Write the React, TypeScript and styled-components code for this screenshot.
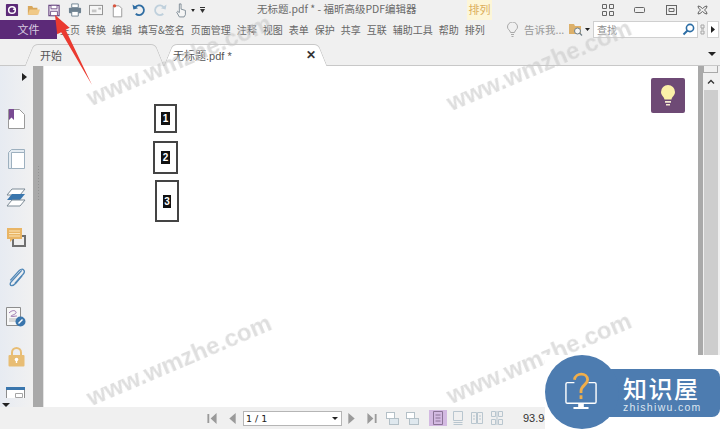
import React from 'react';
import styled, { createGlobalStyle } from 'styled-components';

const GlobalStyle = createGlobalStyle`
  html, body {
    margin: 0;
    padding: 0;
    background: #f0f0f0;
  }
  * {
    box-sizing: border-box;
  }
`;

const Window = styled.div`
  position: relative;
  width: 720px;
  height: 429px;
  overflow: hidden;
  display: flex;
  flex-direction: column;
  background: #f0f0f0;
  font-family: "Noto Sans CJK SC", "Liberation Sans", sans-serif;
  color: #5a5a5a;
`;

const Icon = styled.svg<{ $ml?: number }>`
  display: block;
  flex-shrink: 0;
  margin-left: ${(p) => p.$ml ?? 0}px;
`;

const TitleBar = styled.div`
  height: 20px;
  display: flex;
  align-items: center;
  flex-shrink: 0;
`;

const QuickTools = styled.div`
  width: 257px;
  display: flex;
  align-items: center;
  padding-left: 5px;
  flex-shrink: 0;
`;

const TitleText = styled.div`
  width: 210px;
  font-size: 10.5px;
  line-height: 18px;
  height: 20px;
  white-space: nowrap;
  color: #6a6a6a;
`;

const ContextTab = styled.div`
  width: 25px;
  height: 20px;
  font-size: 11px;
  line-height: 19px;
  text-align: center;
  color: #dcae5c;
  background: #fdf6d8;
`;

const WindowButtons = styled.div`
  margin-left: auto;
  width: 118px;
  display: flex;
  align-items: center;
  justify-content: space-between;
  padding-right: 12px;
`;

const MenuBar = styled.div`
  height: 19px;
  display: flex;
  align-items: center;
  flex-shrink: 0;
`;

const FileButton = styled.div`
  width: 57px;
  height: 19px;
  background: #5c2a78;
  color: #d8cbe0;
  font-size: 11px;
  line-height: 19px;
  text-align: center;
  flex-shrink: 0;
`;

const MenuItems = styled.div`
  width: 432px;
  display: flex;
  gap: 6px;
  padding-left: 3px;
  flex-shrink: 0;
`;

const MenuItem = styled.span`
  font-size: 10px;
  line-height: 19px;
  white-space: nowrap;
  color: #666;
`;

const TellMe = styled.div`
  display: flex;
  align-items: center;
  gap: 6px;
  width: 80px;
  padding-left: 18px;
  flex-shrink: 0;
  font-size: 10.5px;
  color: #999;
  white-space: nowrap;
`;

const SearchBox = styled.div`
  width: 105px;
  height: 17px;
  background: #fff;
  border: 1px solid #cfcfcf;
  display: flex;
  align-items: center;
  justify-content: space-between;
  padding: 0 2px 0 3px;
  margin-left: 3px;
  font-size: 10px;
  color: #8d8d8d;
  flex-shrink: 0;
`;

const RibbonToggle = styled.div`
  width: 12px;
  height: 17px;
  background: #fff;
  border: 1px solid #d4d4d4;
  margin-left: 2px;
  display: flex;
  align-items: center;
  justify-content: center;
  flex-shrink: 0;
`;

const TabRow = styled.div`
  height: 27px;
  display: flex;
  align-items: flex-end;
  flex-shrink: 0;
  padding-left: 25px;
  border-bottom: 1px solid #c8c8c8;
`;

const Tab = styled.div<{ $active?: boolean; $width: number; $pad: number }>`
  position: relative;
  isolation: isolate;
  width: ${(p) => p.$width}px;
  height: 22px;
  margin-bottom: -1px;
  display: flex;
  align-items: center;
  justify-content: space-between;
  padding: 0 11px 0 ${(p) => p.$pad}px;
  font-size: 11px;
  color: #555;
  font-family: "Liberation Sans", "Noto Sans CJK SC", sans-serif;

  &::before,
  &::after {
    content: '';
    position: absolute;
    top: 0;
    bottom: 0;
    width: 60%;
    z-index: -1;
    background: ${(p) => (p.$active ? '#fff' : '#f0f0f0')};
    border-top: 1px solid #c8c8c8;
  }

  &::before {
    left: 4px;
    border-left: 1px solid #c8c8c8;
    border-top-left-radius: 5px;
    transform: skewX(-22deg);
  }

  &::after {
    right: 4px;
    border-right: 1px solid #c8c8c8;
    border-top-right-radius: 5px;
    transform: skewX(22deg);
  }
`;

const TabClose = styled.span`
  font-size: 12px;
  font-weight: 700;
  color: #333;
`;

const RowCaret = styled.div`
  margin-left: auto;
  margin-right: 4px;
  align-self: flex-start;
  margin-top: 13px;
  width: 0;
  height: 0;
  border-left: 4px solid transparent;
  border-right: 4px solid transparent;
  border-top: 4px solid #222;
`;

const Workspace = styled.div`
  flex: 1;
  display: flex;
  min-height: 0;
`;

const Sidebar = styled.div`
  width: 33px;
  display: flex;
  flex-direction: column;
  align-items: center;
  background: linear-gradient(to right, #e7ebf2, #f1f1f1);
  position: relative;
  flex-shrink: 0;
  overflow: hidden;
  padding-top: 7px;
`;

const SideCaret = styled.div`
  width: 0;
  height: 0;
  margin-left: 16px;
  border-top: 4px solid transparent;
  border-bottom: 4px solid transparent;
  border-left: 5px solid #222;
`;

const SideIcons = styled.div`
  margin-top: 28px;
  margin-left: -1px;
  display: flex;
  flex-direction: column;
  align-items: center;
  gap: 19.7px;
  height: 289px;
  overflow: hidden;
`;

const SideBottomCaret = styled.div`
  position: absolute;
  left: 2px;
  bottom: 0;
  width: 0;
  height: 0;
  border-left: 4px solid transparent;
  border-right: 4px solid transparent;
  border-top: 4px solid #222;
`;

const Splitter = styled.div`
  width: 11px;
  background: #a9a9a9;
  border-right: 1px solid #e4e4e4;
  flex-shrink: 0;
  display: flex;
  align-items: center;
  justify-content: center;
`;

const SplitterGrip = styled.div`
  width: 3px;
  height: 36px;
  margin-top: -108px;
  background-image: radial-gradient(#939393 40%, transparent 45%);
  background-size: 3px 3px;
`;

const Page = styled.div`
  flex: 1;
  background: #fff;
  position: relative;
`;

const NumberBox = styled.div<{ $x: number; $y: number; $w: number; $h: number }>`
  position: absolute;
  left: ${(p) => p.$x}px;
  top: ${(p) => p.$y}px;
  width: ${(p) => p.$w}px;
  height: ${(p) => p.$h}px;
  border: 2px solid #444;
  display: flex;
  align-items: center;
  justify-content: center;
`;

const NumberLabel = styled.span`
  background: #111;
  color: #fff;
  font-family: "Liberation Sans", sans-serif;
  font-size: 10px;
  font-weight: 700;
  line-height: 13px;
  padding: 0 1.500px;
`;

const HintButton = styled.div`
  position: absolute;
  right: 13px;
  top: 12px;
  width: 34px;
  height: 35px;
  border-radius: 2px;
  background: #6e4a75;
  display: flex;
  align-items: center;
  justify-content: center;
`;

const Scrollbar = styled.div`
  width: 22px;
  display: flex;
  flex-direction: column;
  flex-shrink: 0;
  background: #f0f0f0;
  border-left: 5px solid #a9a9a9;
  padding-right: 2px;
`;

const ScrollTopGrip = styled.div`
  height: 7px;
  background: #f0f0f0;
  border: 1px solid #a9a9a9;
  border-top: none;
`;

const ScrollArrow = styled.div`
  height: 17px;
  display: flex;
  align-items: center;
  justify-content: center;
`;

const ScrollThumb = styled.div`
  flex: 1;
  margin-left: 1px;
  background: #cdcdcd;
`;

const StatusBar = styled.div`
  height: 22px;
  display: flex;
  align-items: center;
  flex-shrink: 0;
  padding-left: 207px;
  background: #f0f0f0;
`;

const PageSelect = styled.div`
  width: 99px;
  height: 15px;
  background: #fff;
  border: 1px solid #b5b5b5;
  margin: 0 6px 0 7px;
  display: flex;
  align-items: center;
  justify-content: space-between;
  padding: 0 3px 0 2px;
  font-family: "DejaVu Sans", sans-serif;
  font-size: 9.500px;
  color: #222;
`;

const NavGroup = styled.div`
  display: flex;
  align-items: center;
  gap: 12px;
`;

const StackGroup = styled.div`
  display: flex;
  align-items: center;
  gap: 7px;
  margin-left: 9px;
`;

const ViewGroup = styled.div`
  display: flex;
  align-items: center;
  gap: 1.500px;
  margin-left: 10px;
`;

const ViewButton = styled.div<{ $active?: boolean }>`
  width: 18px;
  height: 16px;
  display: flex;
  align-items: center;
  justify-content: center;
  background: ${(p) => (p.$active ? '#d3b9e2' : 'transparent')};
`;

const ZoomValue = styled.div`
  margin-left: 17.500px;
  font-family: "Liberation Sans", sans-serif;
  font-size: 11px;
  color: #333;
`;

const WatermarkLayer = styled.div`
  position: absolute;
  inset: 0;
  pointer-events: none;
`;

const Watermark = styled.div<{ $x: number; $y: number }>`
  position: absolute;
  left: ${(p) => p.$x}px;
  top: ${(p) => p.$y}px;
  font-family: "Liberation Sans", sans-serif;
  font-size: 24px;
  font-weight: 700;
  line-height: 30px;
  color: rgba(200, 200, 200, 0.6);
  transform: rotate(-23deg);
  transform-origin: left center;
  filter: blur(0.500px);
  white-space: nowrap;
`;

const ArrowOverlay = styled.svg`
  position: absolute;
  left: 40px;
  top: 10px;
  pointer-events: none;
`;

const Badge = styled.div`
  position: absolute;
  left: 545px;
  top: 355px;
  width: 175px;
  height: 74px;
  background: #fff;
  color: #fff;
`;

const BadgeCircle = styled.div`
  position: absolute;
  left: 0;
  top: 0;
  width: 74px;
  height: 74px;
  border-radius: 50%;
  background: #4d7cb0;
  display: flex;
  align-items: center;
  justify-content: center;
`;

const BadgeBar = styled.div`
  position: absolute;
  left: 37px;
  top: 14px;
  width: 138px;
  height: 48px;
  border-radius: 0 8px 8px 0;
  background: #4d7cb0;
  display: flex;
  flex-direction: column;
  align-items: flex-start;
  padding-left: 41px;
`;

const BadgeName = styled.div`
  font-family: "Noto Sans CJK SC", sans-serif;
  font-size: 24px;
  font-weight: 500;
  line-height: 26px;
  letter-spacing: 1.500px;
  margin-top: 6px;
`;

const BadgeSite = styled.div`
  font-family: "Liberation Sans", sans-serif;
  font-size: 10.500px;
  line-height: 12px;
  letter-spacing: 1.300px;
  color: #dce6f1;
`;

const menus = ['主页', '转换', '编辑', '填写&签名', '页面管理', '注释', '视图', '表单', '保护', '共享', '互联', '辅助工具', '帮助', '排列'];

const marks: [number, number][] = [
  [88, 84],
  [448, 89],
  [88, 384],
  [448, 382],
];

const Triangle = ({ dir }: { dir: 'l' | 'r' }) => (
  <Icon width="7" height="11" viewBox="0 0 7 12">
    <path d={dir === 'l' ? 'M7 0v12L0 6z' : 'M0 0v12l7-6z'} fill="#9a9a9a" />
  </Icon>
);

const EdgeTriangle = ({ dir }: { dir: 'l' | 'r' }) => (
  <Icon width="10" height="11" viewBox="0 0 10 12">
    {dir === 'l' ? (
      <path d="M0 1h2v10H0zM10 0v12L3.500 6z" fill="#9a9a9a" />
    ) : (
      <path d="M8 1h2v10H8zM0 0v12l6.500-6z" fill="#9a9a9a" />
    )}
  </Icon>
);

const PageStack = () => (
  <Icon width="13" height="13" viewBox="0 0 13 13" fill="none" stroke="#b4c0c7">
    <rect x="0.500" y="0.500" width="8" height="6" fill="#fff" />
    <rect x="3.500" y="6.500" width="9" height="6" fill="#dfe8ee" />
  </Icon>
);

const ViewIcon = ({ kind, color }: { kind: number; color: string }) => (
  <Icon width="12" height="14" viewBox="0 0 12 14" fill="none" stroke={color}>
    {kind === 0 && <path d="M1.500.500h9v13h-9zM3.500 4h5M3.500 7h5M3.500 10h5" />}
    {kind === 1 && <path d="M1.500.500h9v9h-9zM1.500 11.500h9M1.500 13.500h9" />}
    {kind === 2 && <path d="M.5 1.500h5v11h-5zM6.500 1.500h5v11h-5zM2 5h2M8 5h2M2 8h2M8 8h2" />}
    {kind === 3 && <path d="M.5.500h4v5h-4zM7.500.500h4v5h-4zM.5 8.500h4v5h-4zM7.500 8.500h4v5h-4zM6 0v14" />}
  </Icon>
);

export default function App() {
  return (
    <>
      <GlobalStyle />
      <Window>
        <TitleBar>
          <QuickTools>
            <Icon width="14" height="14" viewBox="0 0 14 15">
              <rect x="0.500" y="1" width="13" height="13" rx="1" fill="#5c2a78" />
              <circle cx="7" cy="7.500" r="3.600" fill="none" stroke="#fff" strokeWidth="1.600" />
              <path d="M8 6h3v1.400H8z" fill="#fff" />
            </Icon>
            <Icon $ml={8} width="13" height="12" viewBox="0 0 15 13">
              <path d="M1 2h5l1 2h5v8H1z" fill="#d8a75c" />
              <path d="M3 6h12l-2 6H1z" fill="#f0c987" />
            </Icon>
            <Icon $ml={8} width="12" height="13" viewBox="0 0 14 14">
              <path d="M1 1h12v12H1z" fill="#efe6f3" stroke="#6a4a82" strokeWidth="1.300" />
              <path d="M3.500 1h7v4h-7zM3 8h8v5H3z" fill="#fff" stroke="#6a4a82" />
            </Icon>
            <Icon $ml={8} width="14" height="14" viewBox="0 0 15 15">
              <path d="M4 1h7v4H4z" fill="#fff" stroke="#6e8190" />
              <rect x="1" y="5" width="13" height="6" rx="1" fill="#6e8190" />
              <path d="M4 9h7v5H4z" fill="#fff" stroke="#6e8190" />
            </Icon>
            <Icon $ml={7} width="14" height="12" viewBox="0 0 15 13">
              <rect x="0.500" y="1.500" width="14" height="10" fill="#f6f6f6" stroke="#8d8d8d" />
              <path d="M3 6h5v3H3z" fill="#c7c7c7" />
              <path d="M10 4h3v2h-3z" fill="#b5b5b5" />
            </Icon>
            <Icon $ml={9} width="11" height="15" viewBox="0 0 13 16">
              <path d="M1.500 2.500h7l3 3v10h-10z" fill="#fff" stroke="#8d8d8d" />
              <circle cx="3" cy="2.500" r="2" fill="#d9553f" />
            </Icon>
            <Icon $ml={9} width="14" height="14" viewBox="0 0 15 15" fill="none">
              <path d="M3.500 4.500A5.200 5.200 0 1 1 4 11.500" stroke="#2f6da3" strokeWidth="1.900" />
              <path d="M.5 1.500l1 5.500 5-1.500z" fill="#2f6da3" />
            </Icon>
            <Icon $ml={7} width="14" height="14" viewBox="0 0 15 15" fill="none">
              <path d="M11.500 4.500A5.200 5.200 0 1 0 11 11.500" stroke="#bfd0dc" strokeWidth="1.900" />
              <path d="M14.500 1.500l-1 5.500-5-1.500z" fill="#bfd0dc" />
            </Icon>
            <Icon $ml={8} width="13" height="16" viewBox="0 0 15 17" fill="none">
              <path d="M5 1.500h2v6l5 1.500v5l-1.500 2.500H5L2 11l1-1 2 1.500z" fill="#f5f5f5" stroke="#75848f" />
            </Icon>
            <Icon $ml={3} width="4" height="3" viewBox="0 0 5 4">
              <path d="M0 0h5L2.500 4z" fill="#222" />
            </Icon>
            <Icon $ml={5} width="5" height="6" viewBox="0 0 5 6">
              <path d="M0 0h5v1H0zM0 2h5L2.500 6z" fill="#333" />
            </Icon>
          </QuickTools>
          <TitleText>无标题.pdf * - 福昕高级PDF编辑器</TitleText>
          <ContextTab>排列</ContextTab>
          <WindowButtons>
            <Icon width="12" height="12" viewBox="0 0 12 12" fill="none" stroke="#666">
              <path d="M.5.500h4v4h-4zM7.500.500h4v4h-4zM.5 7.500h4v4h-4zM7.500 7.500h4v4h-4z" />
            </Icon>
            <Icon width="11" height="6" viewBox="0 0 11 6" fill="none" stroke="#666">
              <rect x="0.500" y="0.500" width="10" height="5" rx="1" />
            </Icon>
            <Icon width="11" height="10" viewBox="0 0 11 10" fill="none" stroke="#666">
              <rect x="0.500" y="0.500" width="10" height="9" />
              <path d="M3 3.500h5v3H3z" />
            </Icon>
            <Icon width="11" height="10" viewBox="0 0 11 10" fill="none" stroke="#666">
              <path d="M1 1l2 .5 2.500 2L8 1.500 10 1l-.5 2L7.500 5l2 2 .5 2-2-.5-2.500-2L3 8.500 1 9l.5-2 2-2-2-2z" />
            </Icon>
          </WindowButtons>
        </TitleBar>

        <MenuBar>
          <FileButton>文件</FileButton>
          <MenuItems>
            {menus.map((m) => (
              <MenuItem key={m}>{m}</MenuItem>
            ))}
          </MenuItems>
          <TellMe>
            <Icon width="11" height="15" viewBox="0 0 11 15" fill="none" stroke="#a8a8a8">
              <path d="M3.500 10.500C3 8 .5 7.500.5 5a5 5 0 0 1 10 0c0 2.500-2.500 3-3 5.500zM4 12.500h3M4.500 14.500h2" />
            </Icon>
            告诉我...
          </TellMe>
          <Icon width="14" height="13" viewBox="0 0 14 13">
            <path d="M0 1h5l1 2h6v8H0z" fill="#dcb06a" />
            <circle cx="8.500" cy="8" r="3" fill="#f5f5f5" stroke="#6e7f8a" />
            <path d="M10.500 10l2.500 2.500" stroke="#6e7f8a" strokeWidth="1.200" />
          </Icon>
          <Icon $ml={2} width="5" height="3" viewBox="0 0 5 3">
            <path d="M0 0h5L2.500 3z" fill="#222" />
          </Icon>
          <SearchBox>
            查找
            <Icon width="13" height="13" viewBox="0 0 13 13" fill="none">
              <circle cx="8" cy="5" r="3.600" stroke="#2d6ea5" strokeWidth="1.600" />
              <path d="M5.500 7.500L1.500 11.500" stroke="#2d6ea5" strokeWidth="2" />
            </Icon>
          </SearchBox>
          <Icon $ml={2} width="5" height="11" viewBox="0 0 5 11" fill="none">
            <path d="M1 1h3v3H1zM1 5h3M1 7h3v3H1z" stroke="#a5a5a5" />
          </Icon>
          <RibbonToggle>
            <Icon width="4" height="7" viewBox="0 0 4 7">
              <path d="M0 0v7l4-3.500z" fill="#222" />
            </Icon>
          </RibbonToggle>
        </MenuBar>

        <TabRow>
          <Tab $width={139} $pad={15}>开始</Tab>
          <Tab $active $width={163} $pad={9}>
            无标题.pdf *<TabClose>✕</TabClose>
          </Tab>
          <RowCaret />
        </TabRow>

        <Workspace>
          <Sidebar>
            <SideCaret />
            <SideIcons>
              <Icon width="17" height="20" viewBox="0 0 17 20">
                <path d="M.5.500h11l5 5v14H.5z" fill="#fff" stroke="#9a9a9a" />
                <path d="M1 0h5v11L3.500 8.500 1 11z" fill="#7a4b93" />
              </Icon>
              <Icon width="17" height="20" viewBox="0 0 17 20">
                <path d="M.5 3.500l3-3h13v16h-3l-3 3H.5z" fill="#e4ebf1" stroke="#9db0bf" />
                <path d="M3.500 3.500h13v16h-13z" fill="#fff" stroke="#9db0bf" />
              </Icon>
              <Icon width="20" height="20" viewBox="0 0 20 20">
                <path d="M6 1h13l-5 6H1z" fill="#fff" stroke="#7d8b96" />
                <path d="M6 6h13l-5 6H1z" fill="#3a76ad" />
                <path d="M6 12h13l-5 6H1z" fill="#fff" stroke="#7d8b96" />
              </Icon>
              <Icon width="19" height="20" viewBox="0 0 19 20">
                <path d="M5 7h14v12H5z" fill="#6f6f6f" />
                <path d="M7 9h10v8H7z" fill="#eee" />
                <path d="M0 0h15v11H6l-3 3v-3H0z" fill="#e9b565" />
                <path d="M2 3h11M2 5.500h11M2 8h11" stroke="#fbe4b8" />
              </Icon>
              <Icon width="18" height="20" viewBox="0 0 18 21" fill="none">
                <path d="M15 2.500L4 14.500c-2 2.200-1 4 .5 4s3-1 4.500-2.700L15.500 8" stroke="#4f86b6" strokeWidth="1.400" />
                <path d="M3 13L12 3c2-2 4-2 5-1s1 3-1 5l-8 9" stroke="#4f86b6" strokeWidth="1.400" />
              </Icon>
              <Icon width="20" height="20" viewBox="0 0 20 20">
                <path d="M.5.500h14v18H.5z" fill="#f7f7f7" stroke="#8d8d8d" />
                <path d="M3 6c3-3 6-3 7-1s-4 3-5 4 5 0 6 0" fill="none" stroke="#9e79b0" />
                <path d="M3 12h8M3 14h8" stroke="#b5b5b5" />
                <circle cx="14.500" cy="14.500" r="5" fill="#3a76ad" />
                <path d="M12.500 16.500l4-4" stroke="#fff" strokeWidth="1.500" />
              </Icon>
              <Icon width="17" height="20" viewBox="0 0 17 20">
                <path d="M4 9V5.500a4.500 4.500 0 0 1 9 0V9" fill="none" stroke="#e8bd74" strokeWidth="2" />
                <rect x="0.500" y="8" width="16" height="11.500" rx="1" fill="#e8bd74" />
                <circle cx="8.500" cy="12.500" r="1.800" fill="#fff" />
                <path d="M7.800 13h1.400v3H7.800z" fill="#fff" />
              </Icon>
              <Icon width="20" height="16" viewBox="0 0 20 16">
                <path d="M.5.500h18v15H.5z" fill="#fff" stroke="#8d8d8d" />
                <path d="M0 0h19v3H0z" fill="#3a76ad" />
                <path d="M9.500 6.500h7v4h-7z" fill="none" stroke="#a5a5a5" />
              </Icon>
            </SideIcons>
            <SideBottomCaret />
          </Sidebar>
          <Splitter>
            <SplitterGrip />
          </Splitter>
          <Page>
            <NumberBox $x={110} $y={38} $w={23} $h={29}>
              <NumberLabel>1</NumberLabel>
            </NumberBox>
            <NumberBox $x={109} $y={75} $w={25} $h={33}>
              <NumberLabel>2</NumberLabel>
            </NumberBox>
            <NumberBox $x={111} $y={114} $w={24} $h={42}>
              <NumberLabel>3</NumberLabel>
            </NumberBox>
            <HintButton>
              <Icon width="16" height="22" viewBox="0 0 16 22">
                <path d="M4.500 14.500C4 11.500 1 10.500 1 7a7 7 0 0 1 14 0c0 3.500-3 4.500-3.500 7.500z" fill="#fbf0a8" />
                <path d="M5 16h6v1.800H5zM6 19h4v1.600H6z" fill="#f4e9d0" />
              </Icon>
            </HintButton>
          </Page>
          <Scrollbar>
            <ScrollTopGrip />
            <ScrollArrow>
              <Icon width="8" height="5" viewBox="0 0 8 5" fill="none">
                <path d="M1 4.500l3-3 3 3" stroke="#333" strokeWidth="1.300" />
              </Icon>
            </ScrollArrow>
            <ScrollThumb />
          </Scrollbar>
        </Workspace>

        <StatusBar>
          <NavGroup>
            <EdgeTriangle dir="l" />
            <Triangle dir="l" />
          </NavGroup>
          <PageSelect>
            1 / 1
            <Icon width="6" height="3" viewBox="0 0 6 3">
              <path d="M0 0h6L3 3z" fill="#222" />
            </Icon>
          </PageSelect>
          <NavGroup>
            <Triangle dir="r" />
            <EdgeTriangle dir="r" />
          </NavGroup>
          <StackGroup>
            <PageStack />
            <PageStack />
          </StackGroup>
          <ViewGroup>
            <ViewButton $active>
              <ViewIcon kind={0} color="#8a7396" />
            </ViewButton>
            <ViewButton>
              <ViewIcon kind={1} color="#b9c6cf" />
            </ViewButton>
            <ViewButton>
              <ViewIcon kind={2} color="#b9c6cf" />
            </ViewButton>
            <ViewButton>
              <ViewIcon kind={3} color="#b9c6cf" />
            </ViewButton>
          </ViewGroup>
          <ZoomValue>93.94</ZoomValue>
        </StatusBar>

        <WatermarkLayer>
          {marks.map(([x, y]) => (
            <Watermark key={`${x}-${y}`} $x={x} $y={y}>
              www.wmzhe.com
            </Watermark>
          ))}
        </WatermarkLayer>

        <ArrowOverlay width="60" height="85" viewBox="0 0 60 85">
          <path d="M15 5L29.600 17.700 25.600 19.800 52 75 21.200 22.200 17.200 24.300z" fill="#ea3a30" />
        </ArrowOverlay>

        <Badge>
          <BadgeBar>
            <BadgeName>知识屋</BadgeName>
            <BadgeSite>zhishiwu.com</BadgeSite>
          </BadgeBar>
          <BadgeCircle>
            <Icon $ml={-2} width="32" height="40" viewBox="0 0 34 42" fill="none">
              <path d="M10 11H2.500a1.500 1.500 0 0 0-1.500 1.500v19A1.500 1.500 0 0 0 2.500 33h29a1.500 1.500 0 0 0 1.500-1.500v-19a1.500 1.500 0 0 0-1.500-1.500H25" stroke="#fff" strokeWidth="1.500" />
              <path d="M14 33h6v4h5v2H9v-2h5z" fill="#fff" />
              <path d="M10 8c1-8 14-8 14 0 0 5-7 6-7 12v2" stroke="#f0ae4b" strokeWidth="3" />
              <path d="M15.500 24.500h3v4h-3z" fill="#f0ae4b" />
            </Icon>
          </BadgeCircle>
        </Badge>
      </Window>
    </>
  );
}
